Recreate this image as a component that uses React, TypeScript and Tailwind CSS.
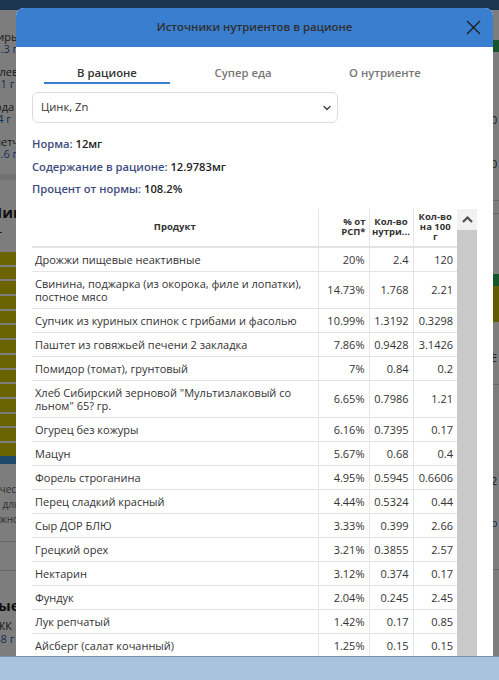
import React from 'react'

type Row = { name: React.ReactNode; pct: string; amount: string; per100: string }

const rows: Row[] = [
  { name: 'Дрожжи пищевые неактивные', pct: '20%', amount: '2.4', per100: '120' },
  {
    name: (
      <>
        Свинина, поджарка (из окорока, филе и лопатки),
        <br />
        постное мясо
      </>
    ),
    pct: '14.73%',
    amount: '1.768',
    per100: '2.21',
  },
  { name: 'Супчик из куриных спинок с грибами и фасолью', pct: '10.99%', amount: '1.3192', per100: '0.3298' },
  { name: 'Паштет из говяжьей печени 2 закладка', pct: '7.86%', amount: '0.9428', per100: '3.1426' },
  { name: 'Помидор (томат), грунтовый', pct: '7%', amount: '0.84', per100: '0.2' },
  {
    name: (
      <>
        Хлеб Сибирский зерновой "Мультизлаковый со
        <br />
        льном" 65? гр.
      </>
    ),
    pct: '6.65%',
    amount: '0.7986',
    per100: '1.21',
  },
  { name: 'Огурец без кожуры', pct: '6.16%', amount: '0.7395', per100: '0.17' },
  { name: 'Мацун', pct: '5.67%', amount: '0.68', per100: '0.4' },
  { name: 'Форель строганина', pct: '4.95%', amount: '0.5945', per100: '0.6606' },
  { name: 'Перец сладкий красный', pct: '4.44%', amount: '0.5324', per100: '0.44' },
  { name: 'Сыр ДОР БЛЮ', pct: '3.33%', amount: '0.399', per100: '2.66' },
  { name: 'Грецкий орех', pct: '3.21%', amount: '0.3855', per100: '2.57' },
  { name: 'Нектарин', pct: '3.12%', amount: '0.374', per100: '0.17' },
  { name: 'Фундук', pct: '2.04%', amount: '0.245', per100: '2.45' },
  { name: 'Лук репчатый', pct: '1.42%', amount: '0.17', per100: '0.85' },
  { name: 'Айсберг (салат кочанный)', pct: '1.25%', amount: '0.15', per100: '0.15' },
]

const macros = [
  ['Жиры', '32.3 г'],
  ['Углеводы', '221 г'],
  ['Вода', '1.4 г'],
  ['Клетчатка', '12.6 г'],
]

// the page behind the dialog, only its edges are visible
const BackgroundPage = () => (
  <div className="flex h-full flex-col bg-[#fafafa]">
    <div className="h-[10px] bg-[#36689f]" />
    <div className="flex flex-1">
      {/* left sidebar */}
      <div className="-ml-[12px] flex w-[90px] flex-col overflow-hidden">
        <div className="flex flex-col gap-[12px] pt-[21px] text-[11px] leading-[11.5px]">
          {macros.map(([label, value]) => (
            <div key={label} className="flex flex-col">
              <span className="text-[#333]">{label}</span>
              <span className="text-[#2b5cb0]">{value}</span>
            </div>
          ))}
        </div>
        <div className="mt-[15px] h-[6px] bg-[#e2e2e2]" />
        <div className="pt-[24px] text-[15px] font-bold leading-[16px] text-[#222]">Мин</div>
        <div className="pt-[8px] text-[12px] leading-[14px] text-[#333]">мг</div>
        <div className="mt-[10px] flex flex-col gap-[2px]">
          {Array.from({ length: 14 }).map((_, i) => (
            <div key={i} className="h-[12.7px] bg-[#d6c600]" />
          ))}
        </div>
        <div className="h-[8px] bg-[#3c8fd8]" />
        <div className="flex flex-col pt-[18px] text-[10px] leading-[15px] text-[#666]">
          <span>Качество</span>
          <span>ие для</span>
          <span>важно</span>
        </div>
        <div className="mt-[14px] h-[1px] bg-[#d4d4d4]" />
        <div className="mt-[28px] h-[1px] bg-[#d4d4d4]" />
        <div className="pt-[26px] text-[15px] font-bold leading-[16px] text-[#222]">ные</div>
        <div className="pt-[6px] text-[11px] leading-[13px] text-[#333]">НЖК</div>
        <div className="text-[11px] leading-[13px] text-[#2b5cb0]">288 г</div>
      </div>
      <div className="flex-1" />
      {/* right column */}
      <div className="flex w-[8px] flex-col overflow-hidden">
        <div className="mt-[30px] h-[12px] bg-[#2eaa5a]" />
        <div className="pt-[62px] text-[11px] leading-[12px] text-[#333]">0</div>
        <div className="pt-[32px] text-[11px] leading-[12px] text-[#333]">0</div>
        <div className="mt-[30px] h-[1px] bg-[#cfcfcf]" />
        <div className="mt-[12px] h-[1px] bg-[#cfcfcf]" />
        <div className="mt-[60px] h-[12px] bg-[#2eaa5a]" />
        <div className="h-[36px] bg-[#c8b400]" />
        <div className="pt-[30px] text-[11px] leading-[12px] text-[#333]">E</div>
        <div className="mt-[20px] h-[1px] bg-[#cfcfcf]" />
        <div className="pt-[90px] text-[11px] leading-[12px] text-[#333]">2</div>
        <div className="pt-[30px] text-[11px] leading-[12px] text-[#2b5cb0]">o</div>
        <div className="mt-[40px] h-[1px] bg-[#cfcfcf]" />
        <div className="mt-[22px] h-[12px] w-[2px] bg-[#333]" />
      </div>
    </div>
  </div>
)

const NutrientTable = () => (
  <table className="w-[425px] table-fixed border-collapse text-[#333]">
    <colgroup>
      <col className="w-[286px]" />
      <col className="w-[51px]" />
      <col className="w-[44px]" />
      <col className="w-[44px]" />
    </colgroup>
    <thead>
      <tr className="h-[38px] border-b-2 border-[#e3e3e3] text-[9.5px] font-bold leading-[9.7px]">
        <th className="border-r border-[#e6e6e6] text-center">Продукт</th>
        <th className="border-r border-[#e6e6e6] pr-[3px] text-right">
          % от
          <br />
          РСП*
        </th>
        <th className="border-r border-[#e6e6e6] text-center">
          Кол-во
          <br />
          нутри...
        </th>
        <th className="text-center">
          Кол-во
          <br />
          на 100
          <br />г
        </th>
      </tr>
    </thead>
    <tbody className="text-[11px] leading-[13px]">
      {rows.map((r, i) => (
        <tr key={i} className="border-b border-[#e4e4e4]">
          <td className="border-r border-[#e6e6e6] py-[5px] pl-[3px] align-middle">{r.name}</td>
          <td className="border-r border-[#e6e6e6] pr-[4px] text-right align-middle">{r.pct}</td>
          <td className="border-r border-[#e6e6e6] pr-[4px] text-right align-middle">{r.amount}</td>
          <td className="pr-[4px] text-right align-middle">{r.per100}</td>
        </tr>
      ))}
    </tbody>
  </table>
)

export default function App() {
  return (
    <div className="relative h-[680px] w-[499px] overflow-hidden font-['Open_Sans',sans-serif]">
      <BackgroundPage />
      <div className="absolute inset-0 bg-black/50" />

      {/* dialog */}
      <div className="absolute left-[16px] top-[8px] flex h-[648px] w-[477px] flex-col overflow-hidden rounded-t-[8px] bg-white">
        <div className="relative flex h-[39px] shrink-0 items-center justify-center bg-[#3a7ecf]">
          <span className="text-[11.3px] font-semibold text-[#2e2e2e]">Источники нутриентов в рационе</span>
          <button className="absolute right-[12px] top-[12px] flex h-[15px] w-[15px] items-center justify-center">
            <svg width="15" height="15" viewBox="0 0 15 15" fill="none" stroke="#1f1f1f" strokeWidth="1.4" strokeLinecap="round">
              <path d="M1.5 1.5 13.5 13.5M13.5 1.5 1.5 13.5" />
            </svg>
          </button>
        </div>

        <div className="flex min-h-0 flex-1 flex-col px-[16px] pt-[17px]">
          {/* tabs */}
          <div className="flex pl-[12px] text-[11.3px] font-semibold leading-[18px]">
            <div className="w-[126px] border-b-2 border-[#3a7ecf] text-center text-[#333]">В рационе</div>
            <div className="ml-[10px] w-[126px] text-center text-[#777]">Супер еда</div>
            <div className="ml-[16px] w-[126px] text-center text-[#777]">О нутриенте</div>
          </div>

          <div className="mt-[8px] flex h-[31px] w-[306px] items-center justify-between rounded-[6px] border border-[#dcdcdc] pl-[8px] pr-[5px]">
            <span className="text-[11.2px] text-[#333]">Цинк, Zn</span>
            <svg width="10" height="10" viewBox="0 0 10 10" fill="none" stroke="#444" strokeWidth="1.4" strokeLinecap="round" strokeLinejoin="round">
              <path d="M2 3.5 5 6.5 8 3.5" />
            </svg>
          </div>

          <div className="mt-[10px] flex flex-col text-[11.2px] font-semibold leading-[22.5px]">
            <div>
              <span className="text-[#3f4c7e]">Норма: </span>
              <span className="text-[#222]">12мг</span>
            </div>
            <div>
              <span className="text-[#3f4c7e]">Содержание в рационе: </span>
              <span className="text-[#222]">12.9783мг</span>
            </div>
            <div>
              <span className="text-[#3f4c7e]">Процент от нормы: </span>
              <span className="text-[#222]">108.2%</span>
            </div>
          </div>

          <div className="mt-[8px] flex min-h-0 flex-1">
            <div className="overflow-hidden">
              <NutrientTable />
            </div>
            <div className="flex w-[20px] shrink-0 flex-col">
              <div className="flex h-[21px] items-center justify-center bg-[#f1f1f1]">
                <svg width="11" height="7" viewBox="0 0 11 7" fill="none" stroke="#505050" strokeWidth="2.2" strokeLinejoin="miter">
                  <path d="M1 6 5.5 1.5 10 6" />
                </svg>
              </div>
              <div className="flex-1 bg-[#c9c9c9]" />
            </div>
          </div>
        </div>
      </div>

      {/* bottom bar */}
      <div className="absolute bottom-0 left-0 right-0 h-[24px] border-t border-[#7d8ea4] bg-[#a9c1dd]" />
    </div>
  )
}
